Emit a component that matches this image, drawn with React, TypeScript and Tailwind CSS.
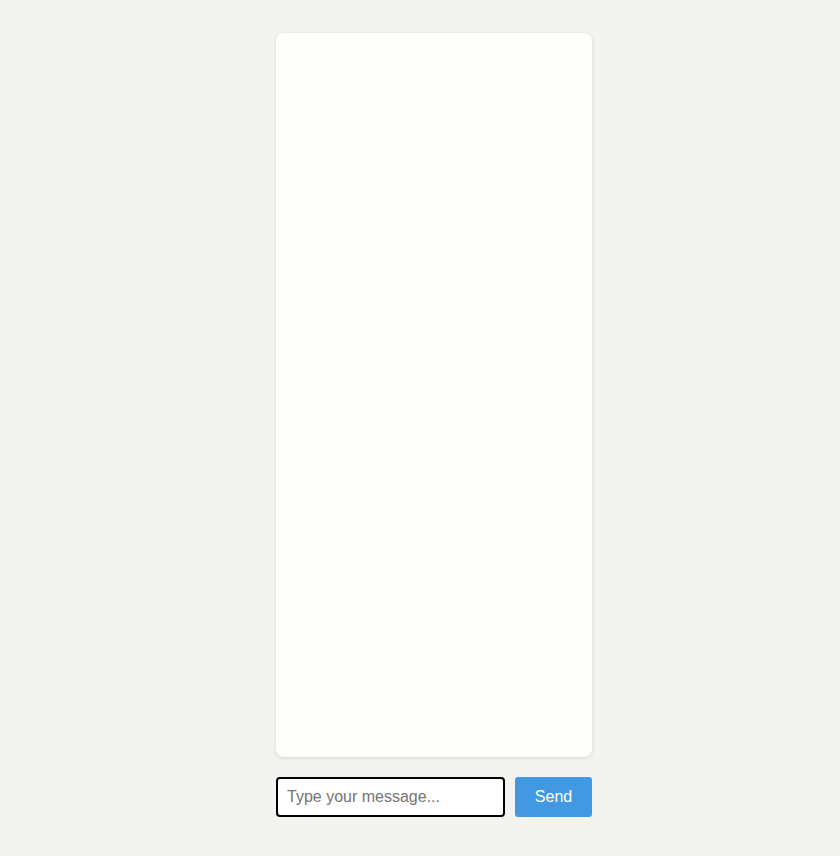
import React from "react";

export default function App() {
  return (
    <div className="min-h-[856px] w-full bg-[#f3f3f0] flex justify-center pt-[33px] pl-[28px]" style={{ fontFamily: '"Liberation Sans", Arial, sans-serif' }}>
      <div className="w-[316px] flex flex-col gap-[20px]">
        <div className="h-[724px] bg-[#fefefa] rounded-[8px] shadow-[0_1px_4px_rgba(0,0,0,0.12)]"></div>
        <div className="flex gap-[10px] h-[40px]">
          <input
            className="flex-1 min-w-0 h-[40px] border-2 border-black rounded-[4px] bg-white pl-[9px] text-[16px] text-black placeholder:text-[#757575] outline-none"
            placeholder="Type your message..."
          />
          <button className="w-[77px] h-[40px] bg-[#4299e1] text-white text-[16px] rounded-[3px]">Send</button>
        </div>
      </div>
    </div>
  );
}
